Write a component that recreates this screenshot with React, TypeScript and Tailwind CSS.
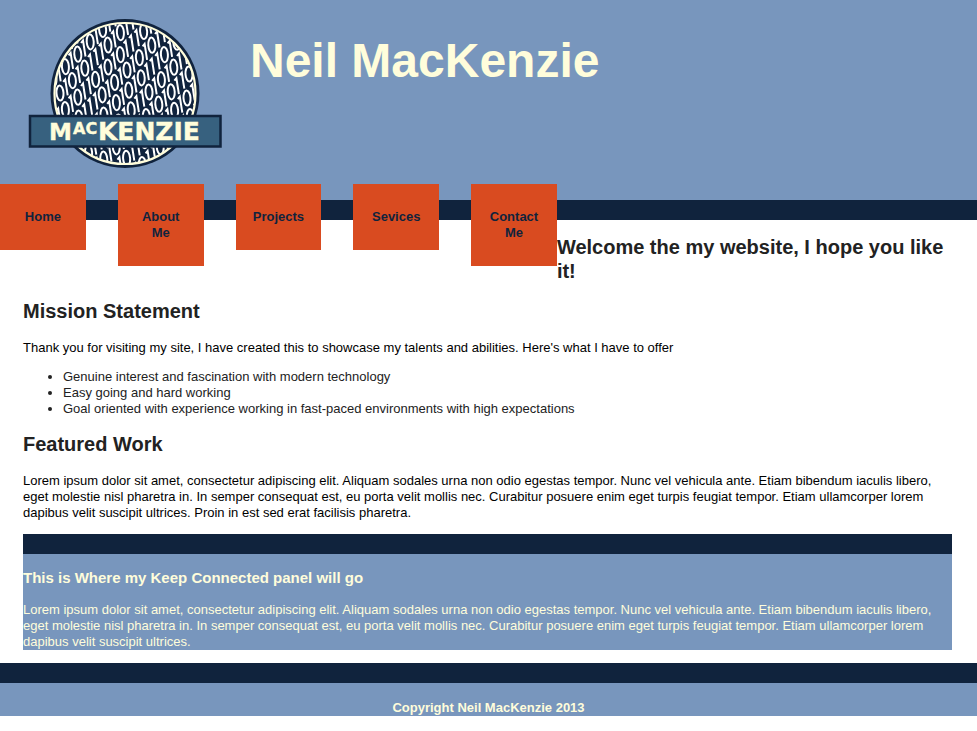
import React from "react";

/* Each row of the binary pattern climbs along the diagonal x + y = diagonal. */
const rows: { diagonal: number; start: number; digits: string }[] = [
  { diagonal: 111, start: 52, digits: "01011010101" },
  { diagonal: 132, start: 53, digits: "01010101011010" },
  { diagonal: 153, start: 60, digits: "01010111010110101" },
  { diagonal: 175, start: 53, digits: "010101101010111010101" },
  { diagonal: 197, start: 55, digits: "10110111010101010110101" },
  { diagonal: 219, start: 56, digits: "0110101101010101110101010" },
  { diagonal: 241, start: 70, digits: "101011010101101010110101" },
  { diagonal: 263, start: 86, digits: "01101010110101011010101" },
  { diagonal: 285, start: 108, digits: "10101101011010110101" },
  { diagonal: 307, start: 130, digits: "01011010110101" },
];

function Binary() {
  const marks: React.ReactElement[] = [];
  rows.forEach((row, r) => {
    let x = row.start;
    row.digits.split("").forEach((digit, i) => {
      const step = digit === "0" ? 3.5 : 2.7;
      if (i > 0) x += step;
      const y = row.diagonal - x;
      marks.push(
        digit === "0" ? (
          <ellipse key={`${r}-${i}`} cx={x} cy={y} rx="3.5" ry="7.6" transform={`rotate(-4 ${x} ${y})`} />
        ) : (
          <polyline key={`${r}-${i}`} points={`${x - 3},${y - 5} ${x - 1},${y - 7.5} ${x + 1.5},${y + 8.5}`} />
        ),
      );
      x += step;
    });
  });
  return (
    <g fill="none" stroke="#ffffff" strokeWidth="2">
      {marks}
    </g>
  );
}

function Logo() {
  return (
    <svg className="h-[184px] w-[250px] shrink-0" viewBox="0 0 250 184" role="img" aria-label="MacKenzie logo">
      <defs>
        <clipPath id="disc">
          <circle cx="125" cy="93.5" r="70" />
        </clipPath>
      </defs>
      <circle cx="125" cy="93.5" r="74.5" fill="#10233d" />
      <g clipPath="url(#disc)">
        <Binary />
      </g>
      <circle cx="125" cy="93.5" r="70.5" fill="none" stroke="#fffddb" strokeWidth="2.2" />
      <rect x="30" y="116" width="190.5" height="30.5" fill="#37617f" stroke="#10233d" strokeWidth="2.5" />
      <g fill="#fffddb" stroke="#fffddb" strokeWidth="0.4" fontFamily="'DejaVu Sans', sans-serif" fontWeight="700">
        <text x="49" y="139.5" fontSize="23">
          M
        </text>
        <text x="73" y="134" fontSize="16">
          AC
        </text>
        <text x="98" y="139.5" fontSize="25">
          KENZIE
        </text>
      </g>
    </svg>
  );
}

const links = ["Home", "About Me", "Projects", "Sevices", "Contact Me"];

const lorem =
  "Lorem ipsum dolor sit amet, consectetur adipiscing elit. Aliquam sodales urna non odio egestas tempor. Nunc vel vehicula ante. Etiam bibendum iaculis libero, eget molestie nisl pharetra in. In semper consequat est, eu porta velit mollis nec. Curabitur posuere enim eget turpis feugiat tempor. Etiam ullamcorper lorem dapibus velit suscipit ultrices.";

const featured = `${lorem} Proin in est sed erat facilisis pharetra.`;

export default function App() {
  return (
    <div className="bg-white font-['Liberation_Sans',Arial,sans-serif] text-[13px] leading-4 text-[#222222]">
      <header className="flex h-[220px] items-start border-b-20 border-[#10233d] bg-[#7896bd]">
        <Logo />
        <h1 className="pt-8 text-[48px] leading-[58px] font-bold text-[#fffddb]">Neil MacKenzie</h1>
      </header>

      <div className="flex items-start">
        <nav className="-mt-9 w-[57%] shrink-0">
          <ul className="grid grid-cols-5 items-start gap-8">
            {links.map((link) => (
              <li key={link}>
                <a href="#" className="block bg-[#d94b20] px-4 py-[25px] text-center font-bold text-[#10233d]">
                  {link}
                </a>
              </li>
            ))}
          </ul>
        </nav>
        <h2 className="pt-[15px] pr-6 text-[20px] leading-6 font-bold">Welcome the my website, I hope you like it!</h2>
      </div>

      <main className="pt-4 pr-[25px] pl-[23px]">
        <h2 className="text-[20px] leading-6 font-bold">Mission Statement</h2>
        <p className="mt-[17px] text-black">
          Thank you for visiting my site, I have created this to showcase my talents and abilities. Here's what I have to offer
        </p>
        <ul className="mt-[13px] list-disc pl-10">
          <li>Genuine interest and fascination with modern technology</li>
          <li>Easy going and hard working</li>
          <li>Goal oriented with experience working in fast-paced environments with high expectations</li>
        </ul>
        <h2 className="mt-[15px] text-[20px] leading-6 font-bold">Featured Work</h2>
        <p className="mt-[17px] text-black">{featured}</p>

        <section className="mt-[13px] border-t-20 border-[#10233d] bg-[#7896bd] text-[#fffddb]">
          <h3 className="pt-[15px] text-[15px] leading-[18px] font-bold">This is Where my Keep Connected panel will go</h3>
          <p className="mt-[15px]">{lorem}</p>
        </section>
      </main>

      <footer className="mt-[13px] border-t-20 border-[#10233d] bg-[#7896bd] pt-[17px] text-center font-bold text-[#fffddb]">
        Copyright Neil MacKenzie 2013
      </footer>
    </div>
  );
}
